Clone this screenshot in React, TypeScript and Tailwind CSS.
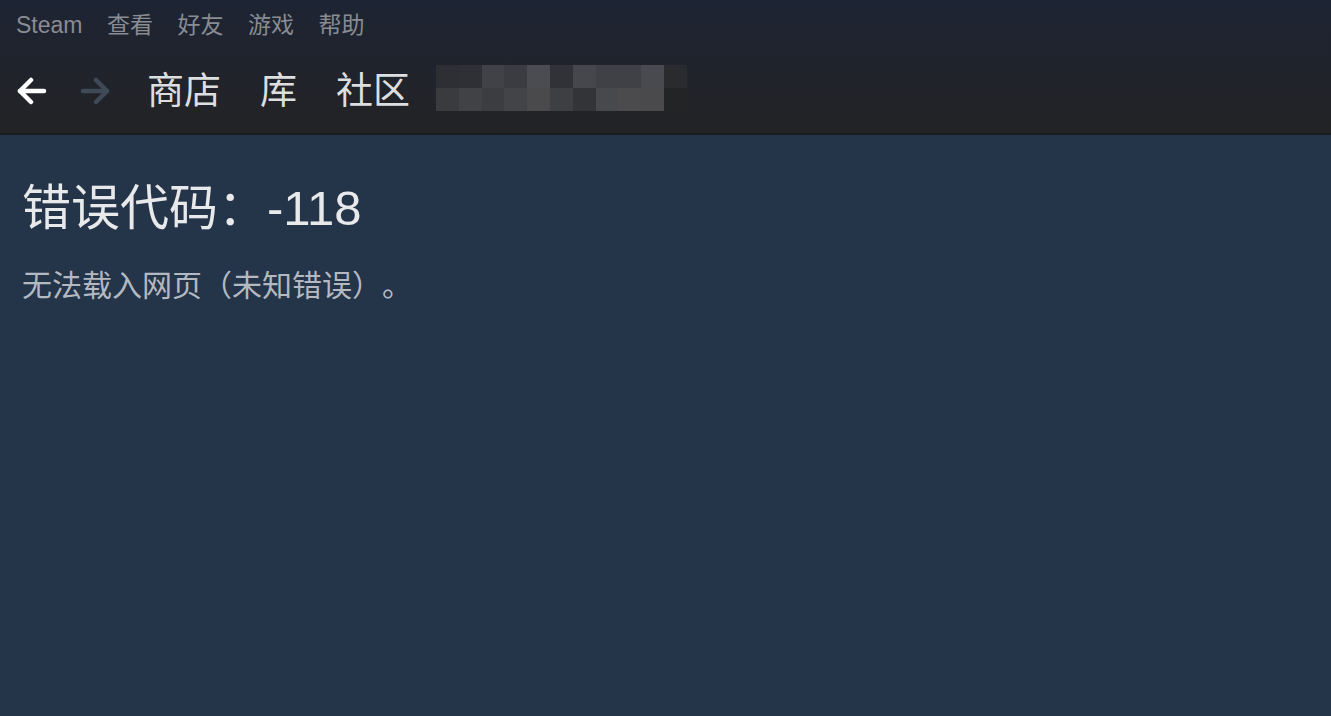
import React from "react";

const menuItems = ["查看", "好友", "游戏", "帮助"];
const navItems = ["商店", "库", "社区"];

// blurred username, two rows of mosaic tiles
const mosaic = [
  ["#2e2f34", "#2f3035", "#404248", "#3a3c41", "#4b4c51", "#313238", "#45474d", "#3f4147", "#3f4147", "#494a4f", "#2a2b2f"],
  ["#3a3b3f", "#414246", "#3c3d41", "#434447", "#4a4a4d", "#3e3f42", "#333437", "#48494c", "#4b4b4e", "#4a4a4d", "#232426"],
];

const cjk = "font-['Liberation_Sans','Noto_Sans_CJK_SC',sans-serif]";

function Arrow({ dir, color }: { dir: "left" | "right"; color: string }) {
  return (
    <svg width="30" height="28" viewBox="0 0 30 28" aria-hidden="true">
      <g
        fill="none"
        stroke={color}
        strokeWidth="4.5"
        strokeLinecap="round"
        strokeLinejoin="round"
        transform={dir === "right" ? "translate(30 0) scale(-1 1)" : undefined}
      >
        <path d="M3 14 H27" />
        <path d="M14 3 L3 14 L14 25" />
      </g>
    </svg>
  );
}

export default function App() {
  return (
    <div
      className={`flex h-[716px] w-[1331px] flex-col overflow-hidden bg-[#243449] [text-spacing-trim:space-all] ${cjk}`}
    >
      <header className="flex h-[135px] flex-col border-b-2 border-[#1a1b1d] bg-gradient-to-b from-[#1d2433] to-[#232325]">
        <nav className="flex h-[51px] items-center gap-[24.5px] pl-[16px] text-[23px] text-[#898c93]">
          <span>Steam</span>
          {menuItems.map((item) => (
            <span key={item}>{item}</span>
          ))}
        </nav>
        <div className="flex h-[80px] items-center pl-[17px]">
          <Arrow dir="left" color="#ffffff" />
          <div className="ml-[33px]">
            <Arrow dir="right" color="#3f4a58" />
          </div>
          <div className="ml-[37px] flex items-center gap-[39px] text-[37px] leading-none text-[#dcdedf]">
            {navItems.map((item) => (
              <span key={item}>{item}</span>
            ))}
          </div>
          <div className="mb-[6px] ml-[26px] grid grid-cols-[repeat(11,22.8px)] grid-rows-[23px_23px]">
            {mosaic.flat().map((c, i) => (
              <div key={i} style={{ backgroundColor: c }} />
            ))}
          </div>
        </div>
      </header>

      <main className="px-[22px] pt-[49px]">
        <h1 className="text-[49px] leading-none text-[#e8e9ea]">错误代码：-118</h1>
        <p className="mt-[38px] text-[30px] leading-none text-[#b4b9c1]">无法载入网页（未知错误）。</p>
      </main>
    </div>
  );
}
